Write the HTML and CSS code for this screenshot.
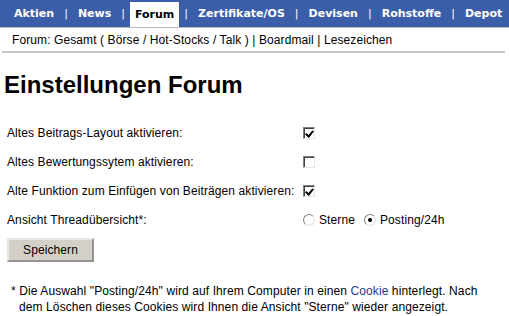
FILE: index.html
```
<!DOCTYPE html>
<html>
<head>
<meta charset="utf-8">
<title>Einstellungen Forum</title>
<link rel="stylesheet" href="styles.css">
</head>
<body>
<div class="topnav">
  <a href="#">Aktien</a><span class="sep">|</span>
  <a href="#">News</a><span class="sep">|</span>
  <a href="#" class="active">Forum</a><span class="sep">|</span>
  <a href="#">Zertifikate/OS</a><span class="sep">|</span>
  <a href="#">Devisen</a><span class="sep">|</span>
  <a href="#">Rohstoffe</a><span class="sep">|</span>
  <a href="#">Depot</a>
</div>
<div class="subnav">
  Forum: Gesamt ( Börse / Hot-Stocks / Talk ) | Boardmail | Lesezeichen
</div>

<h1>Einstellungen Forum</h1>

<form class="settings">
  <div class="row">
    <label>Altes Beitrags-Layout aktivieren:</label>
    <div class="ctrl"><input type="checkbox" class="box" checked></div>
  </div>
  <div class="row">
    <label>Altes Bewertungssytem aktivieren:</label>
    <div class="ctrl"><input type="checkbox" class="box"></div>
  </div>
  <div class="row">
    <label>Alte Funktion zum Einfügen von Beiträgen aktivieren:</label>
    <div class="ctrl"><input type="checkbox" class="box" checked></div>
  </div>
  <div class="row">
    <label>Ansicht Threadübersicht*:</label>
    <div class="ctrl">
      <input type="radio" name="view" class="dot"> Sterne
      <input type="radio" name="view" class="dot second" checked> Posting/24h
    </div>
  </div>
  <button type="button" class="save">Speichern</button>
</form>

<p class="note">* Die Auswahl "Posting/24h" wird auf Ihrem Computer in einen <a href="#">Cookie</a> hinterlegt. Nach<br>dem Löschen dieses Cookies wird Ihnen die Ansicht "Sterne" wieder angezeigt.</p>
</body>
</html>
```
FILE: styles.css
```
body {
  margin: 0;
  font-family: "Liberation Sans", Arial, sans-serif;
  font-size: 12px;
  letter-spacing: 0.1px;
  color: #000;
  background: #fff;
}
.topnav {
  display: flex;
  height: 27px;
  padding-left: 9px;
  background: #3b5ea8;
  border-bottom: 1px solid #b4b9c4;
  font-family: "DejaVu Sans", Verdana, sans-serif;
  font-weight: bold;
  font-size: 11px;
  letter-spacing: 0;
  line-height: 27px;
  color: #fff;
}
.topnav a {
  padding: 0 5px;
  color: #fff;
  text-decoration: none;
}
.topnav a.active {
  margin-top: 2px;
  line-height: 25px;
  background: #fff;
  color: #000;
}
.topnav .sep {
  padding: 0 5px;
  font-weight: normal;
}
.subnav {
  margin: 0 4px 0 2px;
  padding: 0 10px;
  height: 23px;
  line-height: 25px;
  border-bottom: 2px solid #c6c6c6;
}
h1 {
  margin: 17px 0 0 4px;
  font-size: 24px;
  font-weight: bold;
  letter-spacing: 0;
  line-height: 30px;
}
.settings {
  margin: 18px 0 0 7px;
}
.row {
  display: grid;
  grid-template-columns: 296px auto;
  align-items: center;
  height: 29px;
}
.ctrl {
  display: flex;
  align-items: center;
}

/* classic windows style controls */
.box {
  appearance: none;
  position: relative;
  width: 12px;
  height: 12px;
  margin: 0;
  border: 1px solid;
  border-color: #808080 #e4e4e4 #e4e4e4 #808080;
  box-shadow: inset 1px 1px 0 #404040;
  background: #fff;
}
.box:checked::after {
  content: "";
  position: absolute;
  left: 3px;
  top: 1px;
  width: 3px;
  height: 6px;
  border: solid #000;
  border-width: 0 2px 2px 0;
  transform: rotate(40deg);
}
.dot {
  appearance: none;
  position: relative;
  width: 12px;
  height: 12px;
  margin: 0 4px 0 0;
  border: 1px solid;
  border-color: #808080 #e0e0e0 #e0e0e0 #808080;
  border-radius: 50%;
  background: #fff;
}
.dot:checked::after {
  content: "";
  position: absolute;
  left: 3px;
  top: 3px;
  width: 4px;
  height: 4px;
  border-radius: 50%;
  background: #000;
}
.dot.second {
  margin-left: 9px;
}
.save {
  margin-top: 4px;
  width: 87px;
  height: 24px;
  font-family: "Liberation Sans", Arial, sans-serif;
  font-size: 12px;
  letter-spacing: 0.1px;
  color: #000;
  background: #d4d0c8;
  border: 2px outset #e8e6e0;
  padding: 0;
}
.note {
  margin: 21px 0 0 11px;
  padding-left: 8px;
  text-indent: -8px;
  line-height: 16px;
}
.note a {
  color: #1e3c8c;
  text-decoration: none;
}
```
